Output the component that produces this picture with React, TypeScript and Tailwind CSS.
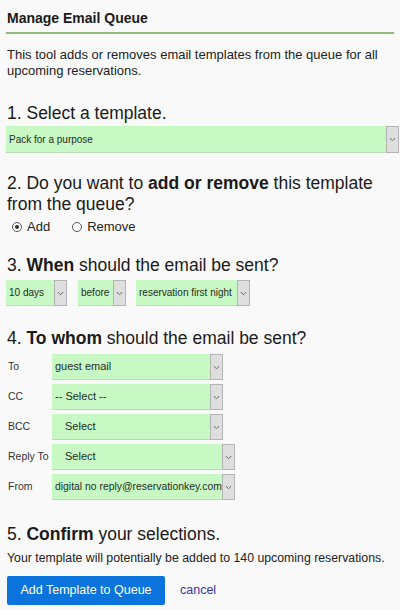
import React from "react";

function Chevron() {
  return (
    <svg width="7" height="5" viewBox="0 0 7 5" fill="none">
      <path d="M0.8 1 L3.5 3.8 L6.2 1" stroke="#6b6b6b" strokeWidth="1" />
    </svg>
  );
}

function Sel({ text, w, indent = false, size = "text-[10px]", h = "h-[26px]" }: { text: string; w: string; indent?: boolean; size?: string; h?: string }) {
  return (
    <div className={`flex ${w} ${h} shrink-0`}>
      <div className={`flex-1 min-w-0 flex items-center bg-[#c8f8c4] border-b border-[#b9dcb4] text-[#1e2e1e] ${size} ${indent ? "pl-[13px]" : "pl-[3px]"} whitespace-nowrap`}>
        {text}
      </div>
      <div className="w-[13px] flex items-center justify-center bg-[#dedede] border border-[#b4b4b4]">
        <Chevron />
      </div>
    </div>
  );
}

function Row({ label, children }: { label: string; children: React.ReactNode }) {
  return (
    <div className="flex items-center h-[26px]">
      <div className="w-[46px] pl-[2px] text-[10.5px] text-[#333]">{label}</div>
      {children}
    </div>
  );
}

export default function App() {
  return (
    <div className="w-[400px] h-[610px] bg-[#f9f9f9] text-[#1a1a1a] font-['Liberation_Sans',Arial,sans-serif] px-[6px] overflow-hidden">
      <div className="pt-[10px] pb-[5px] border-b-2 border-[#8fbb7e]">
        <h1 className="text-[14px] leading-[17px] font-bold pl-[1px]">Manage Email Queue</h1>
      </div>
      <p className="mt-[13px] text-[13px] leading-[16px] pl-[1px] text-[#222]">
        This tool adds or removes email templates from the queue for all upcoming reservations.
      </p>

      <h2 className="mt-[24px] text-[17.5px] leading-[20px] pl-[1px]">1. Select a template.</h2>
      <div className="mt-[3px]">
        <Sel text="Pack for a purpose" w="w-[393px]" h="h-[27px]" />
      </div>

      <h2 className="mt-[20px] text-[17.5px] leading-[21px] pl-[1px]">
        <span className="block whitespace-nowrap">
          2. Do you want to <b>add or remove</b> this template
        </span>
        <span className="block">from the queue?</span>
      </h2>
      <div className="mt-[4px] flex items-center h-[16px] text-[13px] text-[#222]">
        <span className="ml-[6px] w-[10px] h-[10px] rounded-full border border-[#555] flex items-center justify-center bg-white">
          <span className="w-[4px] h-[4px] rounded-full bg-[#333]" />
        </span>
        <span className="ml-[5px]">Add</span>
        <span className="ml-[22px] w-[10px] h-[10px] rounded-full border border-[#555] bg-white" />
        <span className="ml-[5px]">Remove</span>
      </div>

      <h2 className="mt-[20px] text-[17.5px] leading-[20px] pl-[1px]">
        3. <b>When</b> should the email be sent?
      </h2>
      <div className="mt-[5px] flex">
        <Sel text="10 days" w="w-[61px]" />
        <div className="ml-[11px]">
          <Sel text="before" w="w-[48px]" />
        </div>
        <div className="ml-[10px]">
          <Sel text="reservation first night" w="w-[114px]" />
        </div>
      </div>

      <h2 className="mt-[22px] text-[17.5px] leading-[20px] pl-[1px]">
        4. <b>To whom</b> should the email be sent?
      </h2>
      <div className="mt-[6px] flex flex-col gap-[4px]">
        <Row label="To">
          <Sel text="guest email" w="w-[171px]" size="text-[11px]" />
        </Row>
        <Row label="CC">
          <Sel text="-- Select --" w="w-[171px]" size="text-[11px]" />
        </Row>
        <Row label="BCC">
          <Sel text="Select" w="w-[171px]" size="text-[11px]" indent />
        </Row>
        <Row label="Reply To">
          <Sel text="Select" w="w-[183px]" size="text-[11px]" indent />
        </Row>
        <Row label="From">
          <Sel text="digital no reply@reservationkey.com" w="w-[183px]" size="text-[10.4px]" />
        </Row>
      </div>

      <h2 className="mt-[24px] text-[17.5px] leading-[20px] pl-[1px]">
        5. <b>Confirm</b> your selections.
      </h2>
      <p className="mt-[6px] text-[12.3px] leading-[16px] pl-[1px] text-[#222]">
        Your template will potentially be added to 140 upcoming reservations.
      </p>
      <div className="mt-[10px] flex items-center">
        <button className="h-[29px] w-[158px] ml-[1px] rounded-[2px] bg-[#0b74dc] text-white text-[12.5px]">
          Add Template to Queue
        </button>
        <a className="ml-[15px] text-[12.5px] text-[#3a33a6]">cancel</a>
      </div>
    </div>
  );
}
